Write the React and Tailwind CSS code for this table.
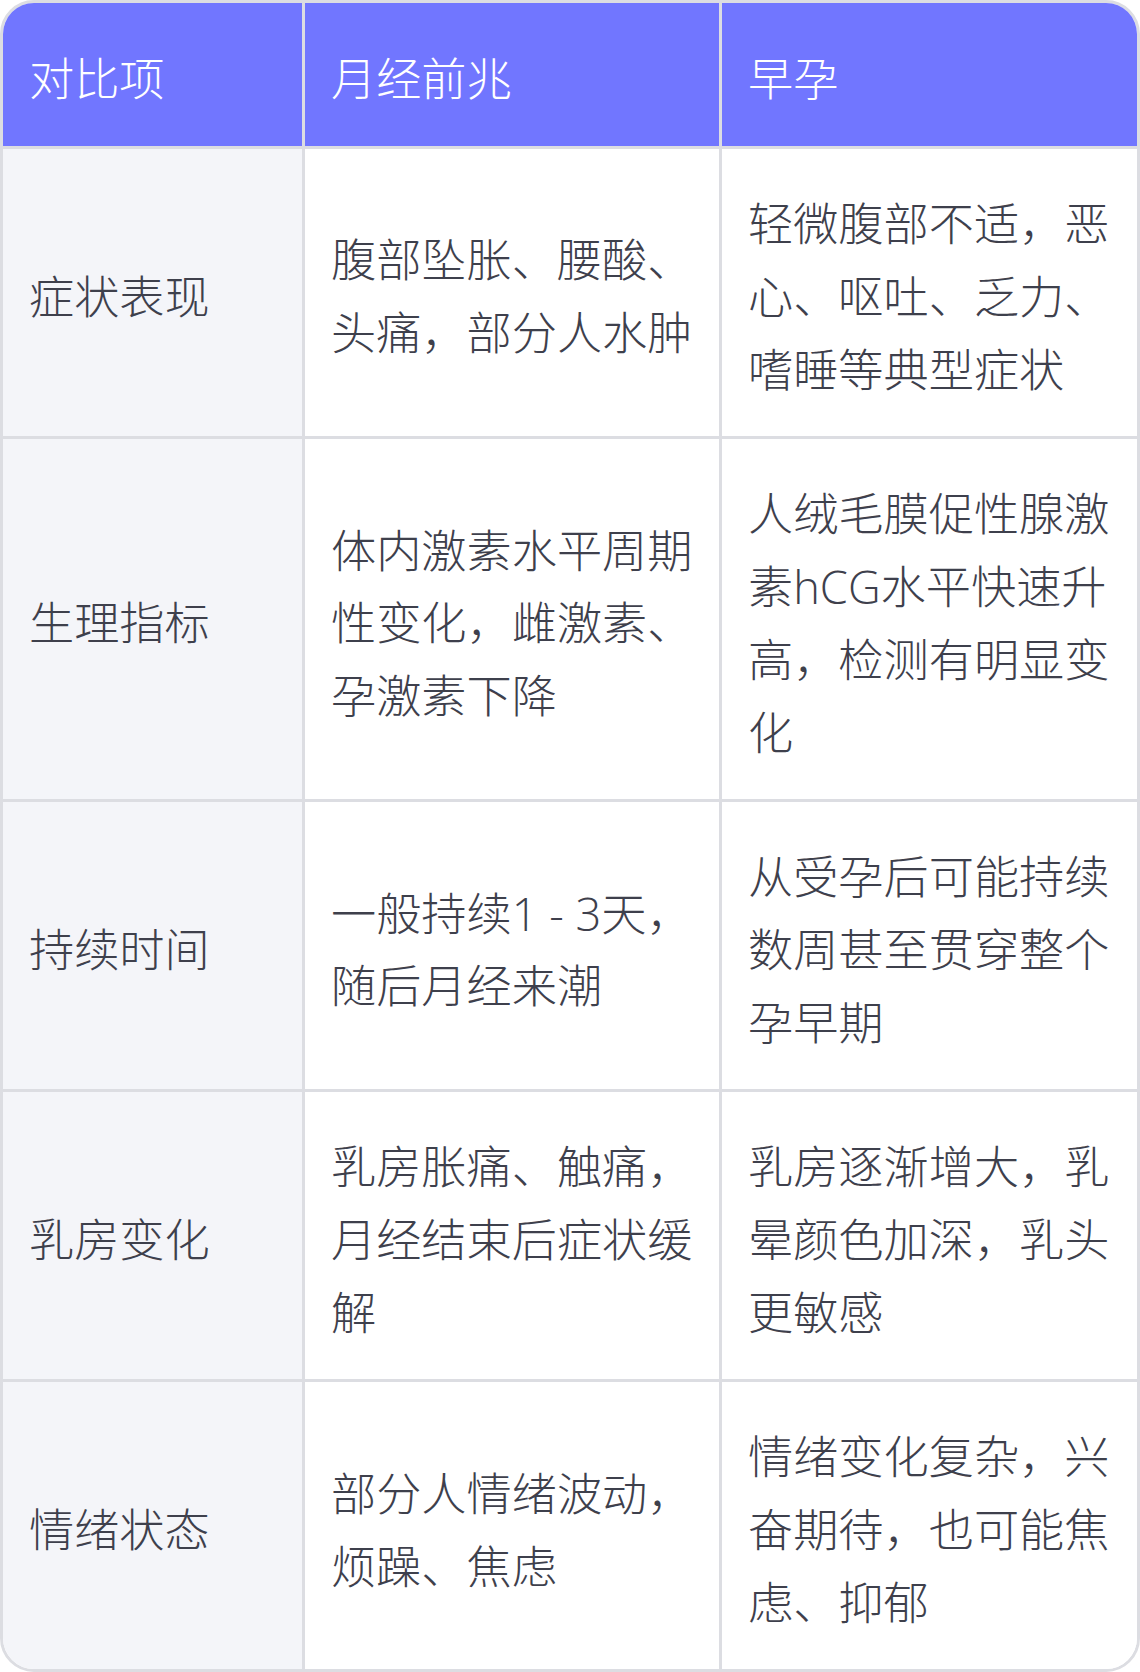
import React from "react";

const rows = [
  ["症状表现", "腹部坠胀、腰酸、头痛，部分人水肿", "轻微腹部不适，恶心、呕吐、乏力、嗜睡等典型症状"],
  ["生理指标", "体内激素水平周期性变化，雌激素、孕激素下降", "人绒毛膜促性腺激素hCG水平快速升高，检测有明显变化"],
  ["持续时间", "一般持续1 - 3天，随后月经来潮", "从受孕后可能持续数周甚至贯穿整个孕早期"],
  ["乳房变化", "乳房胀痛、触痛，月经结束后症状缓解", "乳房逐渐增大，乳晕颜色加深，乳头更敏感"],
  ["情绪状态", "部分人情绪波动，烦躁、焦虑", "情绪变化复杂，兴奋期待，也可能焦虑、抑郁"],
];

export default function App() {
  return (
    <div
      className="w-[1140px] bg-white"
      style={{ fontFamily: '"Open Sans", "Noto Sans CJK SC", sans-serif' }}
    >
      <div className="border-[3px] border-[#dcdde2] rounded-[34px] overflow-hidden">
        <div className="grid grid-cols-[302px_417px_1fr] text-[45.2px] leading-[72.8px] font-light">
          {["对比项", "月经前兆", "早孕"].map((h, i) => (
            <div
              key={h}
              className={`bg-[#7176ff] text-white flex items-center pl-[26px] pr-[20px] pt-[40.4px] pb-[29.4px] border-b-[3px] border-[#dcdde2] ${i < 2 ? "border-r-[3px]" : ""}`}
            >
              {h}
            </div>
          ))}
          {rows.map((r, ri) =>
            r.map((c, ci) => (
              <div
                key={ri + "-" + ci}
                className={`flex items-center pl-[26px] pr-[20px] pt-[39.4px] pb-[29.4px] text-[#3e404c] border-[#dcdde2] ${ci === 0 ? "bg-[#f4f5f9]" : "bg-white"} ${ci < 2 ? "border-r-[3px]" : ""} ${ri < rows.length - 1 ? "border-b-[3px]" : ""}`}
              >
                <div className={ci === 0 ? "" : "w-[362px]"}>{c}</div>
              </div>
            ))
          )}
        </div>
      </div>
    </div>
  );
}
